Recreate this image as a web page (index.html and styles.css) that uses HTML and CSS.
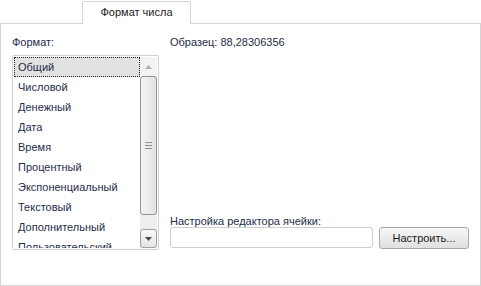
FILE: index.html
```html
<!DOCTYPE html>
<html lang="ru">
<head>
    <meta charset="UTF-8">
    <title>Формат числа</title>
    <link rel="stylesheet" href="styles.css">
</head>
<body>
    <div class="tabs">
        <div class="tab">Формат числа</div>
    </div>

    <div class="panel">
        <div class="col-left">
            <div class="label">Формат:</div>
            <div class="listbox">
                <ul class="items">
                    <li class="selected">Общий</li>
                    <li>Числовой</li>
                    <li>Денежный</li>
                    <li>Дата</li>
                    <li>Время</li>
                    <li>Процентный</li>
                    <li>Экспоненциальный</li>
                    <li>Текстовый</li>
                    <li>Дополнительный</li>
                    <li>Пользовательский</li>
                </ul>
                <div class="scrollbar">
                    <div class="sb-btn">
                        <svg width="7" height="4" viewBox="0 0 7 4"><path d="M3.5 0 L7 4 L0 4 Z" fill="#a9b0ba"/></svg>
                    </div>
                    <div class="sb-thumb">
                        <svg width="7" height="7" viewBox="0 0 7 7"><path d="M0 0.5H7M0 3.5H7M0 6.5H7" stroke="#8a929c" stroke-width="1"/></svg>
                    </div>
                    <div class="sb-track"></div>
                    <div class="sb-btn">
                        <svg width="7" height="4" viewBox="0 0 7 4"><path d="M0 0 L7 0 L3.5 4 Z" fill="#444c57"/></svg>
                    </div>
                </div>
            </div>
        </div>

        <div class="col-right">
            <div class="label">Образец: 88,28306356</div>
            <div class="editor">
                <div class="label">Настройка редактора ячейки:</div>
                <div class="editor-row">
                    <input type="text" class="field">
                    <button type="button" class="btn">Настроить...</button>
                </div>
            </div>
        </div>
    </div>
</body>
</html>
```

FILE: styles.css
```css
body {
    margin: 0;
    font-family: 'Liberation Sans', Arial, sans-serif;
    font-size: 11px;
    color: #1e2d48;
    background-color: #fff;
}

.tabs {
    height: 23px;
    padding-left: 82px;
    box-sizing: border-box;
    padding-top: 1px;
}

.tab {
    position: relative;
    width: 109px;
    height: 23px;
    box-sizing: border-box;
    border: 1px solid #d4d4d4;
    border-bottom: none;
    border-radius: 2px 2px 0 0;
    background-color: #fff;
    text-align: center;
    line-height: 21px;
    color: #1b1b1b;
}

.panel {
    width: 481px;
    height: 263px;
    box-sizing: border-box;
    border: 1px solid #d4d4d4;
    padding: 12px 0 0 11px;
    display: flex;
    gap: 11px;
}

.label {
    height: 13px;
    line-height: 13px;
}

.col-left {
    width: 147px;
}

.listbox {
    margin-top: 6px;
    height: 195px;
    box-sizing: border-box;
    border: 1px solid #d0d0d0;
    border-radius: 2px;
    display: flex;
    overflow: hidden;
    padding: 1px;
}

.items {
    list-style: none;
    margin: 0;
    padding: 0;
    flex: 1;
    overflow: hidden;
}

.items li {
    height: 20px;
    line-height: 21px;
    padding-left: 4px;
    white-space: nowrap;
}

.items li.selected {
    background-color: #e2e2e2;
    outline: 1px dotted #222;
    outline-offset: -1px;
}

.scrollbar {
    width: 17px;
    display: flex;
    flex-direction: column;
    background-color: #f0f0f0;
}

.sb-btn {
    height: 19px;
    box-sizing: border-box;
    display: flex;
    align-items: center;
    justify-content: center;
    background-color: #f3f3f3;
}

.sb-btn:last-child {
    border: 1px solid #9aa0a8;
    border-radius: 3px;
    background: linear-gradient(#f7f7f7, #e4e4e4);
}

.sb-thumb {
    height: 139px;
    box-sizing: border-box;
    border: 1px solid #8f959d;
    border-radius: 3px;
    background: linear-gradient(to right, #f4f4f4, #e2e2e2);
    display: flex;
    align-items: center;
    justify-content: center;
}

.sb-track {
    flex: 1;
    background-color: #eeeeee;
}

.col-right {
    flex: 1;
    display: flex;
    flex-direction: column;
}

.editor {
    margin-top: auto;
    margin-bottom: 36px;
}

.editor .label {
    height: 12px;
    line-height: 12px;
}

.editor-row {
    display: flex;
    gap: 6px;
}

.field {
    width: 203px;
    height: 21px;
    box-sizing: border-box;
    border: 1px solid #cfcfcf;
    border-radius: 3px;
    padding: 0 4px;
    margin: 0;
    font: inherit;
}

.btn {
    width: 90px;
    height: 22px;
    box-sizing: border-box;
    border: 1px solid #a8a8a8;
    border-radius: 3px;
    background: linear-gradient(#f6f6f6, #e0e0e0);
    font: inherit;
    color: #1b1b1b;
    padding: 0;
}
```
